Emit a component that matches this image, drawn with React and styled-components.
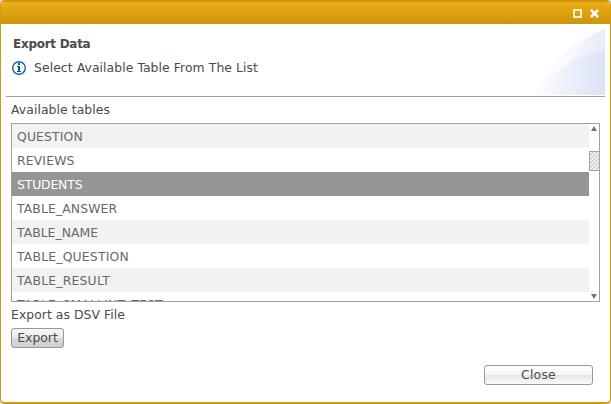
import React from "react";
import styled, { createGlobalStyle } from "styled-components";

const GlobalStyle = createGlobalStyle`
  *, *::before, *::after { box-sizing: border-box; }
  body { margin: 0; background: #dcdcdf; overflow: hidden; }
`;

const Dialog = styled.main`
  display: flex;
  flex-direction: column;
  width: 611px;
  height: 404px;
  border: 1px solid #d29b0b;
  border-top-color: #cc9510;
  border-top-width: 2px;
  border-bottom-width: 2px;
  border-radius: 5px;
  overflow: hidden;
  background: #fff;
  color: #4a4a4a;
  font: 12.4px/18px "DejaVu Sans", sans-serif;
  white-space: nowrap;
`;

const TitleBar = styled.header`
  display: flex;
  flex: none;
  justify-content: flex-end;
  align-items: center;
  gap: 8px;
  height: 22px;
  padding: 1px 11px 0 0;
  background: linear-gradient(#edae14, #cc950f);
`;

const Banner = styled.section`
  display: flex;
  flex: none;
  justify-content: space-between;
  height: 73px;
  margin: 0 5px;
  border-bottom: 1px solid #a0a0a4;
`;

const Intro = styled.div`
  padding: 11px 0 0 7px;
`;

const Heading = styled.h1`
  margin: 0;
  font-size: 12px;
  line-height: 18px;
  font-weight: bold;
  letter-spacing: -0.28px;
`;

const Message = styled.div`
  display: flex;
  align-items: center;
  gap: 8px;
  margin-top: 6px;
  svg { margin-left: -1px; }
`;

const Curve = styled.svg`
  margin-top: 4px;
`;

const Text = styled.span`
  letter-spacing: ${(p) => p.$track || "0"};
`;

const Content = styled.section`
  display: flex;
  flex-direction: column;
  align-items: flex-start;
  padding: 4px 10px 0;
`;

const ListBox = styled.div`
  display: grid;
  grid-template-columns: 577px 10px;
  width: 589px;
  height: 179px;
  margin: 4px 0;
  border: 1px solid #a0a0a4;
  overflow: hidden;
`;

const Rows = styled.ul`
  margin: 0;
  padding: 0;
  list-style: none;
  height: 177px;
  overflow: hidden;
`;

const Row = styled.li`
  height: 24px;
  padding-left: 5px;
  line-height: 25px;
  color: ${(p) => (p.$selected ? "#fff" : "#686868")};
  background: ${(p) => (p.$selected ? "#959595" : p.$shaded ? "#f2f2f2" : "#fff")};
`;

const ScrollBar = styled.div`
  display: flex;
  flex-direction: column;
  height: 177px;
`;

const Arrow = styled.svg`
  flex: none;
`;

const Thumb = styled.div`
  flex: none;
  width: 11px;
  height: 20px;
  margin: 18px 0 auto;
  border: 1px solid #a3a3a6;
  background: repeating-linear-gradient(135deg, #f2f2f2 0 1.42px, #d0d0d0 1.42px 2.83px);
`;

const Button = styled.button`
  width: ${(p) => p.$width};
  height: 20px;
  margin: 0;
  padding: 0;
  border: 1px solid #98989c;
  border-radius: 3px;
  color: #4a4a4a;
  font: inherit;
  line-height: 18px;
  background: ${(p) =>
    p.$strong
      ? "linear-gradient(#f6f6f6 0%, #eaeaea 50%, #d9d9d9 52%, #cfcfcf 100%)"
      : "linear-gradient(#fff 0%, #f5f5f5 50%, #e5e5e5 52%, #fbfbfb 100%)"};
`;

const ExportRow = styled.div`
  display: flex;
  margin-top: 4px;
`;

const Footer = styled.footer`
  display: flex;
  justify-content: flex-end;
  padding: 17px 17px 0 0;
`;

const tables = [
  ["QUESTION", "0.13px"],
  ["REVIEWS", "0.15px"],
  ["STUDENTS", "-0.15px"],
  ["TABLE_ANSWER", "0.12px"],
  ["TABLE_NAME", "0.03px"],
  ["TABLE_QUESTION", "0.19px"],
  ["TABLE_RESULT", "0.2px"],
  ["TABLE_SMALLINT_TEST", "0.15px"],
];

export default function App() {
  return (
    <>
      <GlobalStyle />
      <Dialog>
        <TitleBar>
          <svg width="9" height="9" shapeRendering="crispEdges">
            <rect x="1" y="1" width="7" height="7" fill="none" stroke="#fff3c8" strokeWidth="2" />
          </svg>
          <svg width="9" height="9">
            <path d="M1 1L8 8M8 1L1 8" stroke="#fffdf2" strokeWidth="2.5" />
          </svg>
        </TitleBar>
        <Banner>
          <Intro>
            <Heading>Export Data</Heading>
            <Message>
              <svg width="14" height="14" viewBox="0 0 14 14">
                <circle cx="7" cy="7" r="6.3" fill="#fff" stroke="#1d5f9e" strokeWidth="1.4" />
                <path d="M6 2h2v2H6zM5 5h3v5h1v1H5v-1h1V6H5z" fill="#10589c" />
              </svg>
              <Text $track="0.07px">Select Available Table From The List</Text>
            </Message>
          </Intro>
          <Curve width="73" height="67" viewBox="0 0 73 67">
            <defs>
              <linearGradient id="outer">
                <stop offset="0" stopColor="#fff" />
                <stop offset="1" stopColor="#f2f5fc" />
              </linearGradient>
              <linearGradient id="middle">
                <stop offset="0" stopColor="#f5f8fd" />
                <stop offset="1" stopColor="#e6ecf9" />
              </linearGradient>
              <linearGradient id="inner">
                <stop offset="0" stopColor="#fff" />
                <stop offset="0.45" stopColor="#edf1fb" />
                <stop offset="1" stopColor="#dbe3f6" />
              </linearGradient>
            </defs>
            <path d="M0 67C15 36 44 9 73 1V67Z" fill="url(#outer)" />
            <path d="M33 40C43 21 57 7 73 1V40Z" fill="url(#middle)" />
            <path d="M0 67C20 44 45 27 73 22V67Z" fill="url(#inner)" />
          </Curve>
        </Banner>
        <Content>
          <Text $track="0.07px">Available tables</Text>
          <ListBox>
            <Rows>
              {tables.map(([name, track], i) => (
                <Row key={name} $selected={i === 2} $shaded={i % 2 === 0}>
                  <Text $track={track}>{name}</Text>
                </Row>
              ))}
            </Rows>
            <ScrollBar>
              <Arrow width="10" height="9"><path d="M5 2L8 7H2Z" fill="#777" /></Arrow>
              <Thumb />
              <Arrow width="10" height="9"><path d="M2 2H8L5 7Z" fill="#777" /></Arrow>
            </ScrollBar>
          </ListBox>
          <Text $track="0.05px">Export as DSV File</Text>
          <ExportRow>
            <Button $width="53px" $strong><Text>Export</Text></Button>
          </ExportRow>
        </Content>
        <Footer>
          <Button $width="109px"><Text $track="0.2px">Close</Text></Button>
        </Footer>
      </Dialog>
    </>
  );
}
